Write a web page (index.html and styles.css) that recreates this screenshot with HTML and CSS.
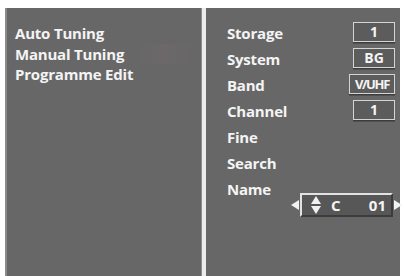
FILE: index.html
```html
<!DOCTYPE html>
<html>
<head>
    <link rel="stylesheet" href="styles.css">
    <title>Manual Tuning</title>
</head>
<body>
    <div class="screen">
        <div class="menu">
            <div class="menu-item">Auto Tuning</div>
            <div class="menu-item active">Manual Tuning</div>
            <div class="menu-item">Programme Edit</div>
        </div>
        <div class="divider"></div>
        <div class="settings">
            <div class="row"><span class="label">Storage</span><span class="value">1</span></div>
            <div class="row"><span class="label">System</span><span class="value">BG</span></div>
            <div class="row"><span class="label">Band</span><span class="value narrow">V/UHF</span></div>
            <div class="row"><span class="label">Channel</span><span class="value">1</span></div>
            <div class="row"><span class="label">Fine</span></div>
            <div class="row"><span class="label">Search</span></div>
            <div class="row name-row">
                <span class="label">Name</span>
                <div class="name-control">
                    <svg class="arrow" width="8" height="10" viewBox="0 0 8 10"><polygon points="8,0 0,5 8,10" fill="#f2f2f2"/></svg>
                    <div class="name-box">
                        <svg class="updown" width="10" height="18" viewBox="0 0 10 18"><polygon points="5,0 10,8 0,8" fill="#f2f2f2"/><polygon points="0,10 10,10 5,18" fill="#f2f2f2"/></svg>
                        <span class="name-letter">C</span>
                        <span class="name-num">01</span>
                    </div>
                    <svg class="arrow" width="8" height="10" viewBox="0 0 8 10"><polygon points="0,0 8,5 0,10" fill="#f2f2f2"/></svg>
                </div>
            </div>
        </div>
    </div>
</body>
</html>
```

FILE: styles.css
```css
body {
    margin: 0;
    background-color: #ffffff;
    font-family: "Open Sans", "DejaVu Sans", sans-serif;
}
.screen {
    display: flex;
    padding: 8px 4px 0 5px;
    height: 268px;
}
.menu {
    width: 187px;
    padding: 15px 0 0 8px;
    background-color: #676767;
    border-left: 2px solid #8a8a8a;
}
.menu-item {
    color: #f4f4f4;
    font-size: 15px;
    font-weight: 700;
    line-height: 20.5px;
    letter-spacing: -0.2px;
}
.active {
    background: linear-gradient(90deg, #676767 62%, #6c6869 80%, #676767 100%);
}
.divider {
    width: 4px;
    background-color: #ececec;
    border-left: 1px solid #8e8e8e;
}
.settings {
    width: 174px;
    padding: 12px 0 0 21px;
    background-color: #676767;
}
.row {
    display: flex;
    justify-content: space-between;
    align-items: center;
    height: 26px;
    padding-right: 5px;
}
.label {
    color: #f4f4f4;
    font-size: 15px;
    font-weight: 700;
    letter-spacing: -0.2px;
}
.value {
    width: 40px;
    height: 18px;
    margin-top: -2px;
    text-align: center;
    color: #f4f4f4;
    font-size: 14px;
    font-weight: 700;
    line-height: 18px;
    background-color: #5c5c5c;
    border: 1.5px solid #d4d4d4;
    box-shadow: 0 1.5px 0 #3c3c3c;
}
.narrow {
    width: 44px;
    letter-spacing: -1.3px;
    font-size: 13px;
}
.name-row {
    align-items: flex-start;
    line-height: 26px;
}
.name-control {
    display: flex;
    align-items: center;
    gap: 1px;
    margin-top: 17px;
    margin-right: -7px;
}
.name-box {
    display: flex;
    align-items: center;
    width: 80px;
    height: 18px;
    padding: 1px 0 1px 9px;
    background-color: #575757;
    border-top: 2px solid #e2e2e2;
    border-left: 2px solid #e2e2e2;
    border-right: 2px solid #3c3c3c;
    border-bottom: 2px solid #3c3c3c;
    color: #f4f4f4;
    font-size: 15px;
    font-weight: 700;
}
.name-letter {
    margin-left: 10px;
}
.name-num {
    margin-left: auto;
    margin-right: 5px;
}
```
